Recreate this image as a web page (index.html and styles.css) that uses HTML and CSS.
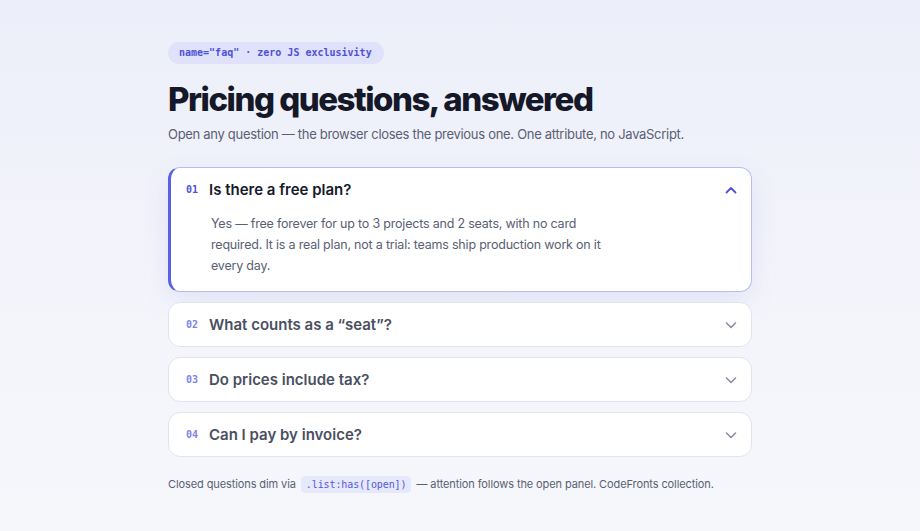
FILE: index.html
```html
<!DOCTYPE html>
<html lang="en">
<head>
  <meta charset="UTF-8">
  <meta name="viewport" content="width=device-width, initial-scale=1.0">
  <title>Pricing FAQ</title>
  <link rel="stylesheet" href="styles.css">
</head>
<body>
  <main class="page">
    <span class="tag">name="faq" · zero JS exclusivity</span>
    <h1 class="title">Pricing questions, answered</h1>
    <p class="lead">Open any question — the browser closes the previous one. One attribute, no JavaScript.</p>

    <div class="list">
      <details class="item" name="faq" open>
        <summary class="question">
          <span class="num">01</span>
          <span class="q-text">Is there a free plan?</span>
          <svg class="chev" width="14" height="14" viewBox="0 0 14 14" aria-hidden="true"><path d="M2.5 9.5 7 5l4.5 4.5" /></svg>
        </summary>
        <p class="answer">Yes — free forever for up to 3 projects and 2 seats, with no card required. It is a real plan, not a trial: teams ship production work on it every day.</p>
      </details>

      <details class="item" name="faq">
        <summary class="question">
          <span class="num">02</span>
          <span class="q-text">What counts as a “seat”?</span>
          <svg class="chev" width="14" height="14" viewBox="0 0 14 14" aria-hidden="true"><path d="M2.5 5 7 9.5 11.5 5" /></svg>
        </summary>
        <p class="answer">Any person who can sign in to the workspace. Guests with view-only links are free.</p>
      </details>

      <details class="item" name="faq">
        <summary class="question">
          <span class="num">03</span>
          <span class="q-text">Do prices include tax?</span>
          <svg class="chev" width="14" height="14" viewBox="0 0 14 14" aria-hidden="true"><path d="M2.5 5 7 9.5 11.5 5" /></svg>
        </summary>
        <p class="answer">Prices are shown before tax. VAT or sales tax is added at checkout where it applies.</p>
      </details>

      <details class="item" name="faq">
        <summary class="question">
          <span class="num">04</span>
          <span class="q-text">Can I pay by invoice?</span>
          <svg class="chev" width="14" height="14" viewBox="0 0 14 14" aria-hidden="true"><path d="M2.5 5 7 9.5 11.5 5" /></svg>
        </summary>
        <p class="answer">Yes, on annual plans. Ask us and we will send one with 30-day terms.</p>
      </details>
    </div>

    <p class="note">Closed questions dim via <code class="chip">.list:has([open])</code> — attention follows the open panel. CodeFronts collection.</p>
  </main>
</body>
</html>
```

FILE: styles.css
```css
* {
  margin: 0;
  padding: 0;
  box-sizing: border-box;
}

body {
  font-family: 'Inter', 'Noto Sans', sans-serif;
  background: linear-gradient(180deg, #eceef9 0%, #f4f5fb 60%, #f6f7fb 100%);
  color: #161a2b;
  min-height: 100vh;
}

.page {
  width: 584px;
  margin: 0 auto;
  padding-top: 42px;
}

/* Mono pill above the heading */
.tag {
  display: block;
  width: fit-content;
  height: 22px;
  line-height: 22px;
  padding: 0 12px 0 11px;
  border-radius: 11px;
  background: #dfe2fa;
  color: #4f52d6;
  font-family: 'DejaVu Sans Mono', monospace;
  font-size: 10px;
  font-weight: bold;
}

.title {
  margin-top: 13px;
  font-size: 33px;
  line-height: 44px;
  font-weight: 800;
  letter-spacing: -0.045em;
  color: #141828;
}

.lead {
  margin-top: 2px;
  font-size: 13px;
  line-height: 22px;
  letter-spacing: -0.3px;
  color: #596073;
}

/* Accordion */
.list {
  margin-top: 22px;
  display: flex;
  flex-direction: column;
  gap: 10px;
}

.item {
  background: #fff;
  border: 1px solid #e1e3ee;
  border-radius: 12px;
}

.item[open] {
  border-color: #b7bdf0;
  border-left: 3px solid #5b5fe3;
  box-shadow: 0 10px 28px rgba(79, 82, 214, 0.10);
}

.question {
  display: flex;
  align-items: center;
  list-style: none;
  padding: 11px 13px 11px 17px;
  cursor: pointer;
}

.question::-webkit-details-marker {
  display: none;
}

.item[open] .question {
  padding-left: 15px;
}

.num {
  width: 23px;
  flex-shrink: 0;
  font-family: 'DejaVu Sans Mono', monospace;
  font-size: 10px;
  font-weight: bold;
  color: #8085e6;
}

.item[open] .num {
  color: #4f52d6;
}

.q-text {
  flex: 1;
  font-size: 15px;
  line-height: 21px;
  font-weight: 600;
  color: #4a4f5f;
}

.item[open] .q-text {
  color: #161a2b;
}

.chev {
  flex-shrink: 0;
  fill: none;
  stroke: #8a8fa0;
  stroke-width: 1.6;
  stroke-linecap: round;
  stroke-linejoin: round;
}

.item[open] .chev {
  stroke: #4f52d6;
  stroke-width: 1.8;
}

.answer {
  max-width: 440px;
  padding: 2px 0 15px 40px;
  font-size: 12.5px;
  line-height: 21px;
  letter-spacing: -0.2px;
  color: #596073;
}

/* Footer note */
.note {
  margin-top: 17px;
  font-size: 11px;
  line-height: 20px;
  letter-spacing: -0.1px;
  color: #596073;
}

.chip {
  display: inline-block;
  padding: 0 5px;
  border-radius: 4px;
  background: #e6e8fb;
  color: #5558d8;
  font-family: 'DejaVu Sans Mono', monospace;
  font-size: 10px;
  line-height: 17px;
  letter-spacing: -0.1px;
  margin: 0 2px;
}
```
